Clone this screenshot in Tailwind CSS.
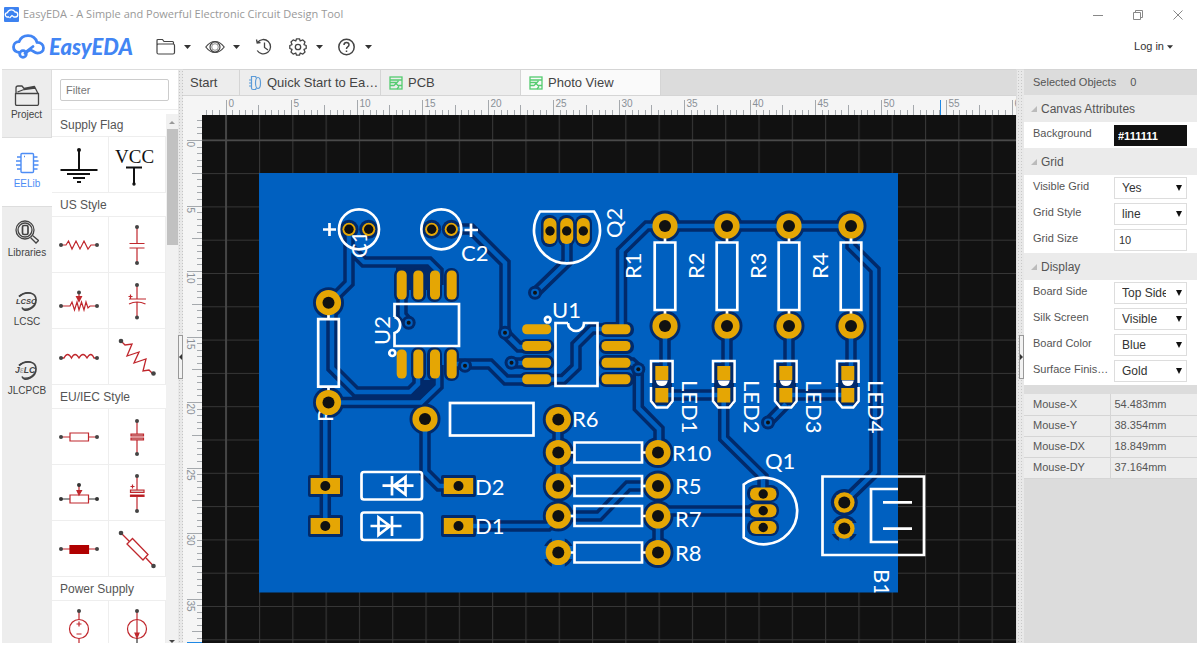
<!DOCTYPE html>
<html lang="en">
<head>
    <meta charset="UTF-8">
    <meta name="viewport" content="width=device-width, initial-scale=1.0">
    <title>EasyEDA - A Simple and Powerful Electronic Circuit Design Tool</title>
    <script src="https://cdn.jsdelivr.net/npm/@tailwindcss/browser@4"></script>
</head>
<body class="bg-white font-['Liberation_Sans',Arial,sans-serif] text-[#555] h-screen overflow-hidden flex flex-col pb-[2px]">

    <!-- Title bar -->
    <div class="h-[29px] shrink-0 flex items-center justify-between pl-1 pr-4">
        <div class="flex items-center gap-1">
            <svg class="size-[15px]" viewBox="0 0 15 15">
                <rect width="15" height="15" rx="1" fill="#3d82f0"/>
                <path d="M5 10H3.500a2.200 2.200 0 0 1 0-4.400 4 3.600 0 0 1 7.500-.6 2.500 2.500 0 0 1 .5 5H10L8 8.500 5.500 11" fill="none" stroke="#fff" stroke-width="1.300"/>
            </svg>
            <span class="font-['Open_Sans',sans-serif] text-[11px] text-[#999]">EasyEDA - A Simple and Powerful Electronic Circuit Design Tool</span>
        </div>
        <div class="flex items-center gap-7 text-[#888]">
            <button aria-label="Minimize"><svg class="size-3" viewBox="0 0 12 12" fill="none" stroke="currentColor"><path d="M1 6.500H11"/></svg></button>
            <button aria-label="Restore"><svg class="size-3" viewBox="0 0 12 12" fill="none" stroke="currentColor"><path d="M1.500 3.500H8.500V10.500H1.500ZM3.500 3.500V1.500H10.500V8.500H8.500"/></svg></button>
            <button aria-label="Close"><svg class="size-3" viewBox="0 0 12 12" fill="none" stroke="currentColor"><path d="M1.500 1.500 10.500 10.500M10.500 1.500 1.500 10.500"/></svg></button>
        </div>
    </div>

    <!-- Toolbar -->
    <header class="h-10 shrink-0 flex items-center pl-3 pr-[27px] pb-[5px]">
        <a href="#" class="flex items-center w-[144px] text-[#4285f4]">
            <svg class="w-[33px] h-[25px]" viewBox="0 0 33 25" fill="none" stroke="currentColor" stroke-width="2.800" stroke-linecap="round">
                <path d="M7.500 18.500C3.500 18 1.500 15.500 1.500 13c0-3 2.200-5.200 5.500-5.300C8.500 4 12 1.700 16 1.700c4.800 0 7.800 2.800 9 6.600 4 .2 6.500 2.500 6.500 5.600 0 3.200-2.600 5.200-6 5.200-3.500 0-4.500-3-7-3-1.800 0-3.500 1.700-5.500 3.200"/>
                <circle cx="11" cy="20" r="3.300"/>
                <path d="M14.500 17.500 21 12.500"/>
            </svg>
            <span class="pl-1 pt-px font-['Lato',sans-serif] font-black italic text-[22px] leading-6">EasyEDA</span>
        </a>
        <nav class="flex items-center gap-[10px] text-[#444]">
            <button class="flex items-center gap-2 w-[39px]" aria-label="File">
                <svg class="w-5 h-5 shrink-0" viewBox="0 0 20 20" fill="none" stroke="currentColor" stroke-width="1.200"><path d="M1 15.500V3.500Q1 2.500 2 2.500H6.500L8 4.500H16.500Q17.500 4.500 17.500 5.500V7M1 8.500Q1 7 2.500 7H17Q18.500 7 18.500 8.500V15.500Q18.500 17 17 17H2.500Q1 17 1 15.500Z"/></svg>
                <svg class="w-[7px] h-1 shrink-0" viewBox="0 0 7 4"><path d="M0 0H7L3.500 4Z" fill="#333"/></svg>
            </button>
            <button class="flex items-center gap-2 w-[39px]" aria-label="View">
                <svg class="w-5 h-5 shrink-0" viewBox="0 0 20 20" fill="none" stroke="currentColor" stroke-width="1.200"><path d="M.8 10Q5 4.500 10 4.500T19.200 10Q15 15.500 10 15.500T.8 10Z"/><circle cx="10" cy="10" r="5"/><circle cx="10" cy="10" r="3.300" stroke-width=".6"/></svg>
                <svg class="w-[7px] h-1 shrink-0" viewBox="0 0 7 4"><path d="M0 0H7L3.500 4Z" fill="#333"/></svg>
            </button>
            <button class="w-6" aria-label="History">
                <svg class="w-5 h-5" viewBox="0 0 20 20" fill="none" stroke="currentColor" stroke-width="1.300"><path d="M3.500 5.500A7.200 7.200 0 1 1 3.200 13.500M2.500 2.500 3.200 6 6.500 5.500M10.500 5.500V10.500L14 13"/></svg>
            </button>
            <button class="flex items-center gap-2 w-[39px]" aria-label="Settings">
                <svg class="w-5 h-5 shrink-0" viewBox="0 0 20 20" fill="none" stroke="currentColor" stroke-width="1.300" stroke-linejoin="round"><path d="M8.500 1.800H11.500L12.200 4 14.800 2.900 17 5 16 7.600 18.200 8.500V11.500L16 12.400 17 15 14.800 17.100 12.200 16 11.500 18.200H8.500L7.800 16 5.200 17.100 3 15 4 12.400 1.800 11.500V8.500L4 7.600 3 5 5.200 2.900 7.800 4Z"/><circle cx="10" cy="10" r="2.700"/></svg>
                <svg class="w-[7px] h-1 shrink-0" viewBox="0 0 7 4"><path d="M0 0H7L3.500 4Z" fill="#333"/></svg>
            </button>
            <button class="flex items-center gap-2 w-[39px]" aria-label="Help">
                <svg class="w-5 h-5 shrink-0" viewBox="0 0 20 20" fill="none" stroke="currentColor" stroke-width="1.500"><circle cx="9.500" cy="10" r="7.700"/><path d="M7 8Q7 5.500 9.500 5.500T12 7.800Q12 9 10.700 9.800T9.500 12M9.500 13.500V15"/></svg>
                <svg class="w-[7px] h-1 shrink-0" viewBox="0 0 7 4"><path d="M0 0H7L3.500 4Z" fill="#333"/></svg>
            </button>
        </nav>
        <button class="ml-auto flex items-center gap-[3px] text-[11px] text-[#333]">Log in
            <svg class="w-[6px] h-1" viewBox="0 0 7 4"><path d="M0 0H7L3.500 4Z" fill="#333"/></svg>
        </button>
    </header>

    <div class="flex-1 min-h-0 flex pl-[2px] pr-[3px]">

        <!-- Side navigation -->
        <nav class="w-[50px] shrink-0 bg-[#ededed] text-[10px] leading-3 text-[#444]">
            <a href="#" class="h-[69px] flex flex-col items-center pt-3 gap-[3px] border-t border-b border-r border-[#ddd]">
                <svg class="w-[26px] h-6" viewBox="0 0 26 24" fill="none" stroke="currentColor" stroke-width="1.300" stroke-linejoin="round"><path d="M1.500 11.500H24.500V22Q24.500 23.500 22.500 23.500H3.500Q1.500 23.500 1.500 22ZM2 11.500V6Q2 4 4 4H8L10 6.500 20.500 4.500 24 11.500M3.500 10 10 7.500 21 6"/></svg>
                Project
            </a>
            <a href="#" class="h-[68px] flex flex-col items-center pt-[13px] gap-[3px] bg-white text-[#4d8df5]">
                <svg class="w-6 h-6" viewBox="0 0 24 24" fill="none" stroke="currentColor" stroke-width="1.400"><rect x="6" y="2.500" width="12.500" height="19" rx="1"/><path d="M2 6H6M1 10H6M1 14H6M2 18H6M18.500 6H22.500M18.500 10H23.500M18.500 14H23.500M18.500 18H22.500M9 5.500H10"/></svg>
                EELib
            </a>
            <a href="#" class="h-[70px] flex flex-col items-center pt-[13px] gap-[3px] border-t border-[#ddd]">
                <svg class="w-6 h-6" viewBox="0 0 24 24" fill="none" stroke="currentColor" stroke-width="1.300"><circle cx="10" cy="10" r="9"/><circle cx="10" cy="10" r="7"/><rect x="7.500" y="5.500" width="5.500" height="9" rx="1.500" stroke-width="1.700"/><path d="M15.500 17.500 21 23 23.500 20.500 17.500 15.500"/></svg>
                Libraries
            </a>
            <a href="#" class="h-[69px] flex flex-col items-center pt-[13px] gap-[3px]">
                <svg class="w-6 h-6" viewBox="0 0 24 24" fill="none" stroke="currentColor"><path d="M4 7.500Q9 3 15 4T21 11 15 20 7 18.500" stroke-width="1.700"/><path d="M4 7.500Q10 2.500 17 4.500M8 20Q16 21 20.500 14" stroke-width="1.200"/><text x="1" y="15" font-size="7.500" font-weight="bold" font-style="italic" fill="#444" stroke="none">LCSC</text></svg>
                LCSC
            </a>
            <a href="#" class="h-[69px] flex flex-col items-center pt-[13px] gap-[3px]">
                <svg class="w-6 h-6" viewBox="0 0 24 24" fill="none" stroke="currentColor"><path d="M4 7.500Q9 3 15 4T21 11 15 20 7 18.500" stroke-width="1.700"/><path d="M4 7.500Q10 2.500 17 4.500M8 20Q16 21 20.500 14" stroke-width="1.200"/><text x="0" y="15" font-size="8.500" font-weight="bold" font-style="italic" fill="#444" stroke="none">J<tspan fill="#aaa">&#949;</tspan>LC</text></svg>
                JLCPCB
            </a>
        </nav>

        <!-- Component library -->
        <aside class="w-[126px] shrink-0 flex flex-col bg-white border-t border-[#ddd]">
            <div class="h-10 shrink-0 px-2 pt-[9px] pr-[9px] border-b border-[#eee]">
                <input type="text" placeholder="Filter" aria-label="Filter" class="block w-full h-[22px] px-[5px] text-[11px] border border-[#ccc] rounded-[2px] placeholder:text-[#777]">
            </div>
            <div class="flex-1 min-h-0 flex">
                <div class="flex-1 overflow-hidden text-xs">
                    <h2 class="h-[26px] pl-2 pt-[7px] leading-4">Supply Flag</h2>
                    <div class="grid grid-cols-2 border-t border-[#eee] [&>button]:h-14 [&>button]:border-r [&>button]:border-b [&>button]:border-[#eee]">
                        <button aria-label="Ground"><svg class="size-14" viewBox="0 0 56 56" stroke="#111" stroke-width="2"><path d="M27 13V33M8.500 33H45.500M15 37H38M21 41H33M25 45H29"/><circle cx="27" cy="13" r="1"/></svg></button>
                        <button aria-label="VCC"><svg class="size-14" viewBox="0 0 56 56" stroke="#111" stroke-width="2"><text x="6" y="26" font-family="Liberation Serif, serif" font-size="19" fill="#111" stroke="none">VCC</text><path d="M17 30.500H33M25 30.500V47"/><circle cx="25" cy="47" r=".7"/></svg></button>
                    </div>
                    <h2 class="h-[23px] pl-2 pt-1 leading-4">US Style</h2>
                    <div class="grid grid-cols-2 border-t border-[#eee] [&>button]:h-14 [&>button]:border-r [&>button]:border-b [&>button]:border-[#eee]">
                        <button aria-label="Resistor US"><svg class="size-14" viewBox="0 0 56 56" fill="none" stroke="#c0272d" stroke-width="1.200"><path d="M9 28H14L16.500 24 20 32 24 24 28 32 32 24 36 32 39 28H45"/><g fill="#444" stroke="none"><circle cx="9" cy="28" r="2"/><circle cx="45" cy="28" r="2"/></g></svg></button>
                        <button aria-label="Capacitor US"><svg class="size-14" viewBox="0 0 56 56" fill="none" stroke="#c0272d" stroke-width="1.200"><path d="M28 10V26.500M20.500 26.500H35.500M20.500 31H35.500M28 31V46"/><g fill="#444" stroke="none"><circle cx="28" cy="10" r="2"/><circle cx="28" cy="46" r="2"/></g></svg></button>
                        <button aria-label="Potentiometer US"><svg class="size-14" viewBox="0 0 56 56" fill="none" stroke="#c0272d" stroke-width="1.200"><path d="M9 33H18L20 29 22.500 37 25 29 27 37 29.500 29 32 37 34 29 36 35 38 33H45M27 19V25"/><path d="M24.500 23.500H29.500L27 28.500Z" fill="#c0272d"/><g fill="#444" stroke="none"><circle cx="9" cy="33" r="2"/><circle cx="45" cy="33" r="2"/><circle cx="27" cy="19.500" r="2"/></g></svg></button>
                        <button aria-label="Polarized capacitor US"><svg class="size-14" viewBox="0 0 56 56" fill="none" stroke="#c0272d" stroke-width="1.200"><path d="M28 12V26M20 26H37M20 31Q28 27 36.500 31M28 29V45M19.500 23.500H23.500M21.500 21.500V25.500"/><g fill="#444" stroke="none"><circle cx="28" cy="12" r="2"/><circle cx="28" cy="44.500" r="2"/></g></svg></button>
                        <button aria-label="Inductor"><svg class="size-14" viewBox="0 0 56 56" fill="none" stroke="#c0272d" stroke-width="1.300"><path d="M9 29H12Q15.500 22 19.500 29 23 22 27 29 31 22 35 29 39 22 42 29H45"/><g fill="#444" stroke="none"><circle cx="9" cy="29" r="2"/><circle cx="45" cy="29" r="2"/></g></svg></button>
                        <button aria-label="Resistor diagonal US"><svg class="size-14" viewBox="0 0 56 56" fill="none" stroke="#c0272d" stroke-width="1.300"><path d="M12 12 16 16 23 15 18 27 30 23 25 34 37 30 34 42 40 41 44 45"/><g fill="#444" stroke="none"><circle cx="12" cy="12" r="2.300"/><circle cx="44.500" cy="44.500" r="2.300"/></g></svg></button>
                    </div>
                    <h2 class="h-[23px] pl-2 pt-1 leading-4">EU/IEC Style</h2>
                    <div class="grid grid-cols-2 border-t border-[#eee] [&>button]:h-14 [&>button]:border-r [&>button]:border-b [&>button]:border-[#eee]">
                        <button aria-label="Resistor EU"><svg class="size-14" viewBox="0 0 56 56" fill="none" stroke="#c0272d" stroke-width="1.200"><path d="M9 28H18M36.500 28H45M18 24H36.500V32H18Z"/><g fill="#444" stroke="none"><circle cx="9" cy="28" r="2"/><circle cx="45" cy="28" r="2"/></g></svg></button>
                        <button aria-label="Capacitor EU"><svg class="size-14" viewBox="0 0 56 56" fill="none" stroke="#c0272d" stroke-width="1.200"><path d="M28 12V25M28 31V45"/><path d="M22 25H34.500V27H22ZM22 29H34.500V31H22Z" fill="#c99"/><g fill="#444" stroke="none"><circle cx="28" cy="12" r="2"/><circle cx="28" cy="45" r="2"/></g></svg></button>
                        <button aria-label="Potentiometer EU"><svg class="size-14" viewBox="0 0 56 56" fill="none" stroke="#c0272d" stroke-width="1.200"><path d="M9 34H18M36.500 34H45" stroke="#333"/><path d="M18 30H36.500V38H18ZM27 20V26"/><path d="M25 25.500H29.500L27 30Z" fill="#c0272d"/><g fill="#333" stroke="none"><circle cx="9" cy="34" r="2"/><circle cx="45" cy="34" r="2"/><circle cx="27" cy="20" r="2"/></g></svg></button>
                        <button aria-label="Polarized capacitor EU"><svg class="size-14" viewBox="0 0 56 56" fill="none" stroke="#c0272d" stroke-width="1.200"><path d="M28 11V25M28 32V46M21.500 21.500H25.500M23.500 19.500V23.500"/><path d="M21.500 25H35V27.500H21.500Z" fill="#dbb"/><path d="M21.500 30H35V31.500H21.500Z" fill="#a11"/><g fill="#444" stroke="none"><circle cx="28" cy="11" r="2"/><circle cx="28" cy="46" r="2"/></g></svg></button>
                        <button aria-label="Resistor filled"><svg class="size-14" viewBox="0 0 56 56" fill="none" stroke="#c0272d" stroke-width="1.200"><path d="M9 28H18M36.500 28H45"/><path d="M18 24.500H36.500V32.500H18Z" fill="#b00000" stroke="#b00000"/><g fill="#444" stroke="none"><circle cx="9" cy="28" r="2"/><circle cx="45" cy="28" r="2"/></g></svg></button>
                        <button aria-label="Resistor diagonal EU"><svg class="size-14" viewBox="0 0 56 56" fill="none" stroke="#c0272d" stroke-width="1.300"><path d="M12 12 20 20M37 37 44.500 45M23.500 17.500 39 33.500 34 39 18 23Z"/><g fill="#444" stroke="none"><circle cx="12" cy="12" r="2.300"/><circle cx="44.500" cy="45" r="2.300"/></g></svg></button>
                    </div>
                    <h2 class="h-[23px] pl-2 pt-1 leading-4">Power Supply</h2>
                    <div class="grid grid-cols-2 border-t border-[#eee] [&>button]:h-14 [&>button]:border-r [&>button]:border-b [&>button]:border-[#eee]">
                        <button aria-label="Voltage source"><svg class="size-14" viewBox="0 0 56 56" fill="none" stroke="#c0272d" stroke-width="1.200"><circle cx="27" cy="28" r="9.500"/><path d="M27 10V18.500M27 37.500V46M24.500 23H29.500M27 20.500V25.500M24.500 33H29.500"/><circle cx="27" cy="10" r="2" fill="#444" stroke="none"/></svg></button>
                        <button aria-label="Current source"><svg class="size-14" viewBox="0 0 56 56" fill="none" stroke="#c0272d" stroke-width="1.200"><circle cx="28" cy="28" r="9.500"/><path d="M28 10V35"/><path d="M26 32H30L28 37Z" fill="#c0272d"/><path d="M28 37.500V46" stroke="#333"/><circle cx="28" cy="10" r="2" fill="#444" stroke="none"/></svg></button>
                    </div>
                </div>
                <!-- scrollbar -->
                <div class="w-3 mt-1 flex flex-col items-center bg-[#f1f1f1]">
                    <svg class="w-[6px] h-[3px] mt-[7px] mb-[5px]" viewBox="0 0 6 3"><path d="M0 3H6L3 0Z" fill="#999"/></svg>
                    <div class="w-[11px] h-[116px] bg-[#c1c1c1]"></div>
                    <svg class="w-[6px] h-[3px] mt-auto" viewBox="0 0 6 3"><path d="M0 0H6L3 3Z" fill="#444"/></svg>
                </div>
            </div>
        </aside>

        <div class="w-[5px] shrink-0 flex items-center bg-[#e8e8e8] bg-[radial-gradient(#c4c4c4_1px,transparent_1px)] bg-[size:3px_3px] border-t border-[#ddd]">
            <button aria-label="Collapse library" class="w-[5px] h-11 flex items-center justify-center border border-[#999] bg-[#f2f2f2]"><svg class="w-[3px] h-[6px]" viewBox="0 0 3 6"><path d="M3 0V6L0 3Z" fill="#333"/></svg></button>
        </div>

        <!-- Editor -->
        <main class="flex-1 min-w-0 flex flex-col">
            <div class="h-[27px] shrink-0 flex bg-[#dcdcdc] border-t border-b border-[#d5d5d5] text-[13px] text-[#444]">
                <button class="w-[57px] pl-[7px] text-left bg-[#ededed] border-r border-[#d5d5d5]">Start</button>
                <button class="w-[141px] flex items-center gap-[5px] pl-2 bg-[#ededed] border-r border-[#d5d5d5]">
                    <svg class="w-[14px] h-4 shrink-0" viewBox="0 0 14 16" fill="none" stroke="#5b9bd8" stroke-width="1.200"><path d="M3.500 3V1.500H8M3.500 3V13Q3.500 14.500 5 14.500H8M1 5H4M1 8H4M1 11H4"/><ellipse cx="10" cy="8" rx="2.500" ry="5.500"/><path d="M8 1.500V3M8 13V14.500"/></svg>
                    <span class="whitespace-nowrap">Quick Start to Ea…</span>
                </button>
                <button class="w-[140px] flex items-center gap-[5px] pl-2 bg-[#ededed] border-r border-[#d5d5d5]">
                    <svg class="w-[14px] h-[14px] shrink-0" viewBox="0 0 14 14" fill="none" stroke="#55cc70" stroke-width="1.300"><rect x="1" y="1" width="12" height="12"/><path d="M1 4H13M1 6.500H8L9.500 5M1 9.500H5L7 7.500 9 9.500H13M8 13 10 10.500"/></svg>
                    PCB
                </button>
                <button class="w-[140px] flex items-center gap-[5px] pl-2 bg-[#fafafa] border-r border-[#d5d5d5]">
                    <svg class="w-[14px] h-[14px] shrink-0" viewBox="0 0 14 14" fill="none" stroke="#55cc70" stroke-width="1.300"><rect x="1" y="1" width="12" height="12"/><path d="M1 4H13M1 6.500H8L9.500 5M1 9.500H5L7 7.500 9 9.500H13M8 13 10 10.500"/></svg>
                    Photo View
                </button>
            </div>
            <svg id="rulerX" class="w-full h-[19px] shrink-0 bg-[#f5f5f5]" stroke="#a5a9ad"></svg>
            <div class="flex-1 min-h-0 flex">
                <svg id="rulerY" class="w-[19px] h-full shrink-0 bg-[#f5f5f5]" stroke="#a5a9ad"></svg>
                <svg class="flex-1 min-w-0 h-full bg-[#111]" font-family="Lato, sans-serif">
                    <defs>
                        <pattern id="grid" x="225.700" y="139.800" width="33.300" height="33.300" patternUnits="userSpaceOnUse">
                            <path d="M.5 0V33.300M0 .5H33.300" stroke="#363636" stroke-width="1.200"/>
                        </pattern>
                        <clipPath id="boardClip"><rect x="259" y="173" width="639" height="419.500"/></clipPath>
                        <g id="tracks">
                            <path d="M349 229V283L329 303M349 229V247L364 262H429L438 271V285M402 290V315L409 323"/>
                            <path d="M332 303V368L356 392H410L418 384V365M328 402.500H421L438 386V365M452 364H490L506 380H536"/>
                            <path d="M451 229H471L505 263V333L519 347H536M511.500 363H536M567 231V262L535 293"/>
                            <path d="M551 379.500H563L576 367V345L592 329H602"/>
                            <path d="M621.500 329V251L647 226H851M851 226V246L875 270V472L844 502"/>
                            <path d="M665 326V372M727 326V372M789 326V372M851 326V372"/>
                            <path d="M662 395H724M786 395H848M723.700 395V438L763 477V494M768 422.500 786 404"/>
                            <path d="M616 363H632L638.300 369V408L659 429V452M558 419V486M658 516V552M658 486H628L599 516H558M658 511H763M458 526H548L558 516"/>
                            <path d="M325.300 402V526M425 419V472L439 486H458"/>
                        </g>
                        <circle id="haloR" r="15.500" fill="#012a6b"/>
                        <g id="padR"><circle r="12.600" fill="#e5a604"/><circle r="6" fill="#111"/></g>
                        <g id="via"><circle r="7" fill="#012a6b"/><circle r="4" fill="#0060c0"/><circle r="2" fill="#111"/></g>
                        <g id="icV"><rect x="-5" y="-14.500" width="10" height="29" rx="4.500" fill="#e5a604"/></g>
                        <g id="icH"><rect x="-14.500" y="-5" width="29" height="10" rx="4.500" fill="#e5a604"/></g>
                        <g id="capPad"><circle r="6.600" fill="#e5a604"/><circle r="4.700" fill="#111"/></g>
                        <g id="diodePad"><rect x="-14.700" y="-8" width="29.400" height="16" fill="#e5a604"/><circle r="5" fill="#111"/></g>
                        <path id="vRes" d="M-10.300 16.500H10.300V84H-10.300ZM0 12V16M0 84V88"/>
                        <path id="hRes" d="M16.500 -10H84V10H16.500ZM12 0H16M84 0H88"/>
                        <g id="led">
                            <path d="M-10.800 383V361H10.800V383M-10.800 387V401L-5.500 407.500H5.500L10.800 401V387" fill="none" stroke="#fff" stroke-width="2.500"/>
                            <rect x="-6.500" y="366" width="13" height="14" fill="#e5a604"/>
                            <path d="M-6 380.500H6Q5 386 0 386T-6 380.500Z" fill="#fff"/>
                            <rect x="-6.500" y="388" width="13" height="14.500" fill="#e5a604"/>
                        </g>
                        <path id="thermal" d="M-18 0H18M0 -18V18" stroke="#0060c0" stroke-width="13"/>
                    </defs>
                    <g transform="translate(-202 -115)">
                        <rect x="190" y="100" width="4000" height="3000" fill="url(#grid)"/>
                        <path d="M226 100V3000M190 140.300H4000" stroke="#4a4a4a" stroke-width="1.700"/>
                        <rect x="259" y="173" width="639" height="419.500" fill="#0060c0"/>

                        <!-- clearance around copper -->
                        <use href="#tracks" fill="none" stroke="#012a6b" stroke-width="11.500"/>
                        <g fill="#012a6b">
                            <path d="M396 264H431L440 274V290H396ZM352 396 410 396 420 380H437L437 388 420 402H358Z"/>
                            <rect x="394" y="268" width="15" height="34" rx="7"/><rect x="411" y="268" width="15" height="34" rx="7"/><rect x="427" y="268" width="15" height="34" rx="7"/><rect x="444" y="268" width="15" height="34" rx="7"/>
                            <rect x="411" y="347" width="15" height="34" rx="7"/><rect x="427" y="347" width="15" height="34" rx="7"/><rect x="444" y="347" width="15" height="34" rx="7"/>
                            <rect x="519" y="339" width="35" height="15" rx="7"/><rect x="519" y="355" width="35" height="15" rx="7"/><rect x="519" y="372" width="35" height="15" rx="7"/>
                            <rect x="599" y="322" width="35" height="15" rx="7"/><rect x="599" y="339" width="35" height="15" rx="7"/><rect x="599" y="355" width="35" height="15" rx="7"/><rect x="599" y="372" width="35" height="15" rx="7"/>
                            <rect x="541" y="215" width="17" height="32" rx="8"/><rect x="558" y="215" width="17" height="32" rx="8"/><rect x="575" y="215" width="17" height="32" rx="8"/>
                            <rect x="747" y="485" width="32" height="17" rx="8"/><rect x="747" y="502" width="32" height="17" rx="8"/><rect x="747" y="519" width="32" height="17" rx="8"/>
                            <rect x="308" y="475" width="35" height="22" rx="2"/><rect x="308" y="515" width="35" height="22" rx="2"/><rect x="441" y="475" width="35" height="22" rx="2"/><rect x="441" y="515" width="35" height="22" rx="2"/>
                            <rect x="652" y="363" width="20" height="42"/><rect x="714" y="363" width="20" height="42"/><rect x="776" y="363" width="20" height="42"/><rect x="838" y="363" width="20" height="42"/>
                            <circle cx="349" cy="229.300" r="9.500"/><circle cx="368.700" cy="229.300" r="9.500"/><circle cx="431.700" cy="229.300" r="9.500"/><circle cx="451.300" cy="229.300" r="9.500"/>
                            <circle cx="844.300" cy="502.500" r="13.500"/><circle cx="844.300" cy="528.500" r="13.500"/>
                        </g>
                        <use href="#haloR" x="328.500" y="302.700"/><use href="#haloR" x="328.500" y="402.500"/><use href="#haloR" x="425" y="419"/>
                        <use href="#haloR" x="665" y="226"/><use href="#haloR" x="727" y="226"/><use href="#haloR" x="789" y="226"/><use href="#haloR" x="851" y="226"/>
                        <use href="#haloR" x="665" y="326"/><use href="#haloR" x="727" y="326"/><use href="#haloR" x="789" y="326"/><use href="#haloR" x="851" y="326"/>
                        <use href="#haloR" x="558.300" y="419.500"/><use href="#haloR" x="558.300" y="452.500"/><use href="#haloR" x="558.300" y="486"/><use href="#haloR" x="558.300" y="516"/><use href="#haloR" x="558.300" y="552.500"/>
                        <use href="#haloR" x="658" y="452.500"/><use href="#haloR" x="658" y="486"/><use href="#haloR" x="658" y="516"/><use href="#haloR" x="658" y="552.500"/>
                        <use href="#thermal" x="558.300" y="552.500"/><path d="M830 528.500H859M844.300 531V546" stroke="#0060c0" stroke-width="11"/>
                        <use href="#tracks" fill="none" stroke="#0060c0" stroke-width="4.500"/>
                        <use href="#via" x="408.700" y="322.700"/><use href="#via" x="505" y="332.700"/><use href="#via" x="511.500" y="362.700"/><use href="#via" x="535" y="292.700"/><use href="#via" x="638.300" y="369.300"/><use href="#via" x="768" y="422.500"/><use href="#via" x="465" y="365.700"/>

                        <!-- silk screen -->
                        <g fill="none" stroke="#fff" stroke-width="2.700">
                            <circle cx="359" cy="229.300" r="20"/><circle cx="441.300" cy="229.300" r="20"/>
                            <path d="M323 229.500H336M329.500 223V236M464.500 230H478M471 223.500V237"/>
                            <path d="M394.500 317V304H459V346H394.500V333A8.500 8.500 0 0 0 394.500 317"/><circle cx="392.300" cy="353" r="3"/>
                            <path d="M568 323H555.500V386H597.500V323H584A8 8 0 0 1 568 323"/><circle cx="547.700" cy="319.700" r="2.800"/>
                            <path d="M540 211.500H594A33 33 0 1 1 540 211.500Z"/>
                            <path d="M743.700 484.500V537.500A33.300 33.300 0 1 0 743.700 484.500Z"/>
                            <rect x="450" y="403" width="83.500" height="32.500"/>
                            <rect x="361.500" y="472" width="60.500" height="27.500" rx="2.500"/><rect x="361.500" y="512.500" width="60.500" height="27.500" rx="2.500"/>
                            <path d="M382.500 485.700H413.500M392 476V495.500M394 485.700 405.500 477V494.500ZM370.500 526H401.500M392 516V536M390 526 378.500 517.500V535Z"/>
                            <path d="M822.500 476.500H924V555H822.500ZM898 489H871V542H898M883 502.300H912M883 528.700H912"/>
                            <use href="#vRes" x="328.500" y="302.700"/><use href="#vRes" x="665" y="226"/><use href="#vRes" x="727" y="226"/><use href="#vRes" x="789" y="226"/><use href="#vRes" x="851" y="226"/>
                            <use href="#hRes" x="558" y="452.500"/><use href="#hRes" x="558" y="486"/><use href="#hRes" x="558" y="516"/><use href="#hRes" x="558" y="552.500"/>
                        </g>
                        <g fill="#fff" font-size="22">
                            <text transform="translate(367 258) rotate(-90)">C1</text>
                            <text x="461" y="261">C2</text>
                            <text transform="translate(390 345) rotate(-90)">U2</text>
                            <text x="552" y="318">U1</text>
                            <text transform="translate(622 238) rotate(-90)">Q2</text>
                            <text transform="translate(641 279) rotate(-90)">R1</text>
                            <text transform="translate(704 279) rotate(-90)">R2</text>
                            <text transform="translate(766 279) rotate(-90)">R3</text>
                            <text transform="translate(828 279) rotate(-90)">R4</text>
                            <text transform="translate(333 422) rotate(-90)">R</text>
                            <text transform="translate(682 380) rotate(90)">LED1</text>
                            <text transform="translate(744 380) rotate(90)">LED2</text>
                            <text transform="translate(806 380) rotate(90)">LED3</text>
                            <text transform="translate(868 380) rotate(90)">LED4</text>
                            <text x="572" y="427">R6</text>
                            <text x="672" y="461">R10</text>
                            <text x="675" y="494">R5</text>
                            <text x="675" y="527">R7</text>
                            <text x="675" y="561">R8</text>
                            <text x="765" y="469">Q1</text>
                            <text x="475" y="495">D2</text>
                            <text x="475" y="534">D1</text>
                            <g clip-path="url(#boardClip)"><text transform="translate(874 569) rotate(90)">B1</text></g>
                        </g>

                        <!-- pads -->
                        <use href="#padR" x="328.500" y="302.700"/><use href="#padR" x="328.500" y="402.500"/><use href="#padR" x="425" y="419"/>
                        <use href="#padR" x="665" y="226"/><use href="#padR" x="727" y="226"/><use href="#padR" x="789" y="226"/><use href="#padR" x="851" y="226"/>
                        <use href="#padR" x="665" y="326"/><use href="#padR" x="727" y="326"/><use href="#padR" x="789" y="326"/><use href="#padR" x="851" y="326"/>
                        <use href="#padR" x="558.300" y="419.500"/><use href="#padR" x="558.300" y="452.500"/><use href="#padR" x="558.300" y="486"/><use href="#padR" x="558.300" y="516"/><use href="#padR" x="558.300" y="552.500"/>
                        <use href="#padR" x="658" y="452.500"/><use href="#padR" x="658" y="486"/><use href="#padR" x="658" y="516"/><use href="#padR" x="658" y="552.500"/>
                        <use href="#icV" x="401.700" y="285"/><use href="#icV" x="418.300" y="285"/><use href="#icV" x="435" y="285"/><use href="#icV" x="451.700" y="285"/>
                        <use href="#icV" x="401.700" y="364"/><use href="#icV" x="418.300" y="364"/><use href="#icV" x="435" y="364"/><use href="#icV" x="451.700" y="364"/>
                        <use href="#icH" x="536.700" y="329.300"/><use href="#icH" x="536.700" y="346"/><use href="#icH" x="536.700" y="362.700"/><use href="#icH" x="536.700" y="379.300"/>
                        <use href="#icH" x="616" y="329.300"/><use href="#icH" x="616" y="346"/><use href="#icH" x="616" y="362.700"/><use href="#icH" x="616" y="379.300"/>
                        <use href="#capPad" x="349" y="229.300"/><use href="#capPad" x="368.700" y="229.300"/><use href="#capPad" x="431.700" y="229.300"/><use href="#capPad" x="451.300" y="229.300"/>
                        <use href="#diodePad" x="325.300" y="486"/><use href="#diodePad" x="325.300" y="526"/><use href="#diodePad" x="458.500" y="486"/><use href="#diodePad" x="458.500" y="526"/>
                        <use href="#led" x="661.800"/><use href="#led" x="723.800"/><use href="#led" x="785.800"/><use href="#led" x="847.800"/>
                        <g fill="#e5a604">
                            <rect x="543.500" y="218" width="13" height="26" rx="6"/><rect x="560.200" y="218" width="13" height="26" rx="6"/><rect x="576.800" y="218" width="13" height="26" rx="6"/>
                            <rect x="750" y="487.500" width="26.500" height="13" rx="6"/><rect x="750" y="504.200" width="26.500" height="13" rx="6"/><rect x="750" y="521" width="26.500" height="13" rx="6"/>
                            <circle cx="844.300" cy="502.500" r="10.300"/><circle cx="844.300" cy="528.500" r="10.300"/>
                        </g>
                        <g fill="#111">
                            <circle cx="550" cy="231" r="4.700"/><circle cx="566.700" cy="231" r="4.700"/><circle cx="583.300" cy="231" r="4.700"/>
                            <circle cx="763.200" cy="494" r="4.700"/><circle cx="763.200" cy="510.700" r="4.700"/><circle cx="763.200" cy="527.500" r="4.700"/>
                            <circle cx="844.300" cy="502.500" r="6"/><circle cx="844.300" cy="528.500" r="6"/>
                        </g>
                    </g>
                </svg>
            </div>
        </main>

        <div class="w-2 shrink-0 flex items-center justify-end bg-[#e8e8e8] bg-[radial-gradient(#c8c8c8_1px,transparent_1px)] bg-[size:3px_3px] border-t border-l border-[#ddd]">
            <button aria-label="Collapse properties" class="w-[5px] h-11 flex items-center justify-center border border-[#999] bg-[#f2f2f2]"><svg class="w-[3px] h-[6px]" viewBox="0 0 3 6"><path d="M0 0V6L3 3Z" fill="#333"/></svg></button>
        </div>

        <!-- Properties -->
        <aside class="w-[173px] shrink-0 bg-[#dcdcdc] text-[11px]">
            <div class="h-[26px] flex items-center pl-[9px] gap-[14px] border-t border-[#d5d5d5]"><span>Selected Objects</span><span>0</span></div>
            <form class="bg-white">
                <h3 class="h-[27px] flex items-center gap-1 pl-[7px] bg-[#ebebeb] text-xs"><svg class="w-[6px] h-[6px]" viewBox="0 0 6 6"><path d="M6 0V6H0Z" fill="#bbb"/></svg>Canvas Attributes</h3>
                <div class="h-[26px] flex items-start pl-[9px]">
                    <label for="background" class="w-[81px] pt-1 leading-[14px]">Background</label>
                    <input id="background" type="text" value="#111111" class="w-[73px] h-[21px] mt-[3px] px-1 bg-[#111] text-white text-[11px] font-bold">
                </div>
                <h3 class="h-[27px] flex items-center gap-1 pl-[7px] bg-[#ebebeb] text-xs"><svg class="w-[6px] h-[6px]" viewBox="0 0 6 6"><path d="M6 0V6H0Z" fill="#bbb"/></svg>Grid</h3>
                <div class="h-[26px] flex items-start pl-[9px]">
                    <label for="visibleGrid" class="w-[81px] pt-1 leading-[14px]">Visible Grid</label>
                    <div class="relative mt-[2px]">
                        <select id="visibleGrid" class="block w-[73px] h-[22px] pl-[7px] pr-5 appearance-none border border-[#ddd] bg-white text-xs text-[#333]"><option>Yes</option><option>No</option></select>
                        <svg class="absolute right-[5px] top-2 w-[6px] h-[6px] pointer-events-none" viewBox="0 0 6 6"><path d="M0 0H6L3 6Z" fill="#111"/></svg>
                    </div>
                </div>
                <div class="h-[26px] flex items-start pl-[9px]">
                    <label for="gridStyle" class="w-[81px] pt-1 leading-[14px]">Grid Style</label>
                    <div class="relative mt-[2px]">
                        <select id="gridStyle" class="block w-[73px] h-[22px] pl-[7px] pr-5 appearance-none border border-[#ddd] bg-white text-xs text-[#333]"><option>line</option><option>dot</option></select>
                        <svg class="absolute right-[5px] top-2 w-[6px] h-[6px] pointer-events-none" viewBox="0 0 6 6"><path d="M0 0H6L3 6Z" fill="#111"/></svg>
                    </div>
                </div>
                <div class="h-[26px] flex items-start pl-[9px]">
                    <label for="gridSize" class="w-[81px] pt-1 leading-[14px]">Grid Size</label>
                    <input id="gridSize" type="text" value="10" class="w-[73px] h-[22px] mt-[2px] px-1 border border-[#ddd] bg-white text-[11px] text-[#333]">
                </div>
                <h3 class="h-[27px] flex items-center gap-1 pl-[7px] bg-[#ebebeb] text-xs"><svg class="w-[6px] h-[6px]" viewBox="0 0 6 6"><path d="M6 0V6H0Z" fill="#bbb"/></svg>Display</h3>
                <div class="h-[26px] flex items-start pl-[9px]">
                    <label for="boardSide" class="w-[81px] pt-1 leading-[14px]">Board Side</label>
                    <div class="relative mt-[2px]">
                        <select id="boardSide" class="block w-[73px] h-[22px] pl-[7px] pr-5 appearance-none border border-[#ddd] bg-white text-xs text-[#333]"><option>Top Side</option><option>Bottom Side</option></select>
                        <svg class="absolute right-[5px] top-2 w-[6px] h-[6px] pointer-events-none" viewBox="0 0 6 6"><path d="M0 0H6L3 6Z" fill="#111"/></svg>
                    </div>
                </div>
                <div class="h-[26px] flex items-start pl-[9px]">
                    <label for="silkScreen" class="w-[81px] pt-1 leading-[14px]">Silk Screen</label>
                    <div class="relative mt-[2px]">
                        <select id="silkScreen" class="block w-[73px] h-[22px] pl-[7px] pr-5 appearance-none border border-[#ddd] bg-white text-xs text-[#333]"><option>Visible</option><option>Hidden</option></select>
                        <svg class="absolute right-[5px] top-2 w-[6px] h-[6px] pointer-events-none" viewBox="0 0 6 6"><path d="M0 0H6L3 6Z" fill="#111"/></svg>
                    </div>
                </div>
                <div class="h-[26px] flex items-start pl-[9px]">
                    <label for="boardColor" class="w-[81px] pt-1 leading-[14px]">Board Color</label>
                    <div class="relative mt-[2px]">
                        <select id="boardColor" class="block w-[73px] h-[22px] pl-[7px] pr-5 appearance-none border border-[#ddd] bg-white text-xs text-[#333]"><option>Blue</option><option>Green</option></select>
                        <svg class="absolute right-[5px] top-2 w-[6px] h-[6px] pointer-events-none" viewBox="0 0 6 6"><path d="M0 0H6L3 6Z" fill="#111"/></svg>
                    </div>
                </div>
                <div class="h-[27px] flex items-start pl-[9px]">
                    <label for="finish" class="w-[81px] pt-1 leading-[14px]">Surface Finis…</label>
                    <div class="relative mt-[2px]">
                        <select id="finish" class="block w-[73px] h-[22px] pl-[7px] pr-5 appearance-none border border-[#ddd] bg-white text-xs text-[#333]"><option>Gold</option><option>Silver</option></select>
                        <svg class="absolute right-[5px] top-2 w-[6px] h-[6px] pointer-events-none" viewBox="0 0 6 6"><path d="M0 0H6L3 6Z" fill="#111"/></svg>
                    </div>
                </div>
            </form>
            <table class="w-full mt-[9px] bg-[#ededed] [&_th]:w-[86px] [&_th]:pl-[9px] [&_th]:text-left [&_th]:font-normal [&_th]:border-r [&_th]:border-[#d5d5d5] [&_td]:pl-1 [&_tr]:h-[21px] [&_tr]:border-b [&_tr]:border-[#d5d5d5]">
                <tr><th scope="row">Mouse-X</th><td>54.483mm</td></tr>
                <tr><th scope="row">Mouse-Y</th><td>38.354mm</td></tr>
                <tr><th scope="row">Mouse-DX</th><td>18.849mm</td></tr>
                <tr><th scope="row">Mouse-DY</th><td>37.164mm</td></tr>
            </table>
        </aside>
    </div>

    <script>
        // ruler scale: one small division is 0.5mm
        const STEP = 6.55;

        function drawRuler(ruler, origin, cursor, vertical) {
            const box = ruler.getBoundingClientRect();
            const length = vertical ? box.height : box.width;
            let marks = '';
            const first = vertical ? Math.ceil(-origin / STEP) : Math.ceil((19 - origin) / STEP);
            for (let i = first; origin + i * STEP < length; i++) {
                const pos = Math.round(origin + i * STEP) + 0.5;
                const size = i % 10 === 0 ? 15 : i % 5 === 0 ? 10 : 5;
                marks += vertical
                    ? `<path d="M${19 - size} ${pos}H19"/>`
                    : `<path d="M${pos} ${19 - size}V19"/>`;
                if (i % 10 === 0) {
                    const place = vertical
                        ? `transform="translate(4 ${pos + 1}) rotate(90)"`
                        : `x="${pos + 2}" y="11"`;
                    marks += `<text ${place} font-size="10" fill="#8a9097" stroke="none">${i / 2}</text>`;
                }
            }
            // cursor position
            marks += vertical
                ? `<path d="M4 ${cursor}H19" stroke="#1e88e5"/>`
                : `<path d="M${cursor} 4V19" stroke="#1e88e5"/>`;
            ruler.innerHTML = marks;
        }

        const rulerX = document.getElementById('rulerX');
        const rulerY = document.getElementById('rulerY');
        const observer = new ResizeObserver(() => {
            drawRuler(rulerX, 42.5, 757.5, false);
            drawRuler(rulerY, 25, 527.5, true);
        });
        observer.observe(rulerX);
        observer.observe(rulerY);
    </script>
</body>
</html>
